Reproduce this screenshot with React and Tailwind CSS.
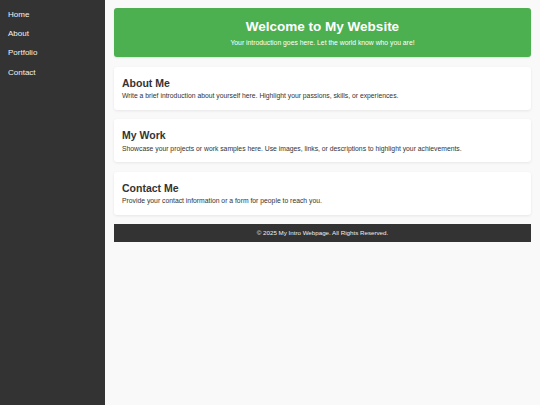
import React from "react";

const cards = [
  { t: "About Me", d: "Write a brief introduction about yourself here. Highlight your passions, skills, or experiences." },
  { t: "My Work", d: "Showcase your projects or work samples here. Use images, links, or descriptions to highlight your achievements." },
  { t: "Contact Me", d: "Provide your contact information or a form for people to reach you." },
];

export default function App() {
  return (
    <div className="flex min-h-[405px] w-full bg-[#f9f9f9] text-[#333]" style={{ fontFamily: '"Liberation Sans", Arial, sans-serif' }}>
      <nav className="w-[105px] shrink-0 bg-[#333] pt-[5px] pl-[8px]">
        <ul className="flex flex-col">
          {["Home", "About", "Portfolio", "Contact"].map((n) => (
            <li key={n} className="h-[19.3px] flex items-center text-[8px] text-[#f2f2f2]">{n}</li>
          ))}
        </ul>
      </nav>
      <main className="flex-1 px-[9px] pt-[8px] flex flex-col gap-[9.5px]">
        <header className="h-[49px] rounded-[3px] bg-[#4caf50] text-white flex flex-col items-center justify-center shadow-[0_1px_2px_rgba(0,0,0,0.1)]">
          <h1 className="text-[13.5px] font-bold leading-none mt-[2px]">Welcome to My Website</h1>
          <p className="text-[6.8px] mt-[7px] leading-none">Your introduction goes here. Let the world know who you are!</p>
        </header>
        {cards.map((c) => (
          <section key={c.t} className="h-[43px] rounded-[3px] bg-white px-[8px] flex flex-col justify-center shadow-[0_1px_3px_rgba(0,0,0,0.08)]">
            <h2 className="text-[10.5px] font-bold leading-none mt-[2px]">{c.t}</h2>
            <p className="text-[6.8px] leading-none mt-[5px]">{c.d}</p>
          </section>
        ))}
        <footer className="h-[18px] bg-[#333] text-[#eee] text-[6.2px] flex items-center justify-center">
          © 2025 My Intro Webpage. All Rights Reserved.
        </footer>
      </main>
    </div>
  );
}
